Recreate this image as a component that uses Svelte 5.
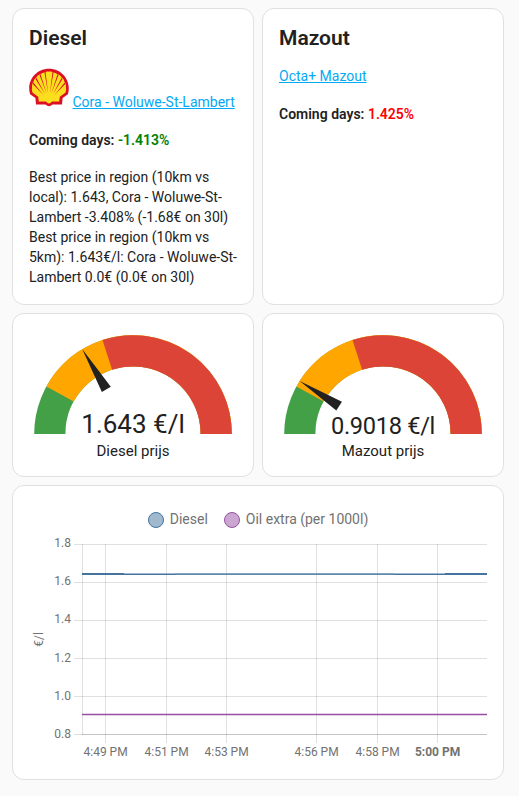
<script>
  const gauges = [
    { value: '1.643 €/l', name: 'Diesel prijs', angle: 59.15, size: 26, spacing: 0, baseline: 103 },
    { value: '0.9018 €/l', name: 'Mazout prijs', angle: 32.46, size: 23.6, spacing: -0.3, baseline: 104 }
  ];
  const levels = [
    { start: 0, color: '#43a047' },
    { start: 28.8, color: '#ffa600' },
    { start: 72, color: '#db4437' }
  ];
  const rad = (deg) => (deg * Math.PI) / 180;
  const arc = (deg) =>
    `M ${-40 * Math.cos(rad(deg))} ${-40 * Math.sin(rad(deg))} A 40 40 0 0 1 40 0`;

  const series = [
    { label: 'Diesel', color: '#44739e', fill: '#a1b9ce' },
    { label: 'Oil extra (per 1000l)', color: '#984ea3', fill: '#cba6d1' }
  ];
  const yTicks = ['1.8', '1.6', '1.4', '1.2', '1.0', '0.8'].map((label, i) => ({
    label,
    y: 14.5 + i * 38,
    baseline: Math.round(17 + i * 38.2)
  }));
  const xTicks = [
    { label: '4:49 PM', x: 76.5 },
    { label: '4:51 PM', x: 137.5 },
    { label: '4:53 PM', x: 197.5 },
    { label: '4:56 PM', x: 287.5 },
    { label: '4:58 PM', x: 348.5 },
    { label: '5:00 PM', x: 408.5, bold: true }
  ];
</script>

<main>
  <div class="row">
    <section class="card text">
      <h2>Diesel</h2>
      <p class="station">
        <svg class="logo" width="40" height="40" viewBox="0 0 40 40">
          <path fill="#dd0f22" d="M20 1.7C31 1.7 39.8 10.4 39.8 21.3c0 2.200-.4 4.200-.9 6L33.600 31 33 37.600H23.300C22.300 38.700 21.200 39.200 20 39.200s-2.300-.5-3.300-1.600H7L6.400 31 1.100 27.300c-.5-1.800-.9-3.800-.9-6C.2 10.400 9 1.700 20 1.700z" />
          <path fill="#fbdf1f" d="M20 4.700C21.200 4.300 23.100 4.700 24 5.400 25.600 5.300 27.400 6.100 28.500 7.300 30.100 7.500 31.800 8.900 32.600 10.500 34.100 11.200 35.300 13.300 35.500 15 36.700 16.300 37.200 18.500 36.900 20.300 37.400 22 37.100 24.200 36.300 25.700L30.800 29.700 30.200 34.600H23C22 35.900 21 36.400 20 36.400S18 35.900 17 34.600H9.800L9.200 29.700 3.700 25.700C2.900 24.200 2.600 22 3.100 20.300 2.800 18.500 3.300 16.300 4.500 15 4.700 13.300 5.900 11.200 7.400 10.500 8.200 8.900 9.900 7.500 11.500 7.300 12.600 6.100 14.400 5.300 16 5.400 16.900 4.700 18.800 4.300 20 4.700z" />
          <path fill="#dd0f22" d="M19.200 27 15.500 5.400 16.500 5.100zM20.800 27 23.500 5.100 24.500 5.400zM17.800 27 10.500 7.900 11.400 7.100zM22.200 27 28.600 7.100 29.500 7.900zM16.300 27.500 6.500 12 7.300 10.800zM23.700 27.500 32.700 10.800 33.500 12zM14.600 28.300 3.800 17 4.300 15.600zM25.400 28.300 35.700 15.600 36.200 17z" />
        </svg>
        <a href="#station">Cora - Woluwe-St-Lambert</a>
      </p>
      <p><b>Coming days: <span class="down">-1.413%</span></b></p>
      <p class="best">
        Best price in region (10km vs local): 1.643, Cora - Woluwe-St-Lambert -3.408% (-1.68€ on 30l)<br />
        Best price in region (10km vs 5km): 1.643€/l: Cora - Woluwe-St-Lambert 0.0€ (0.0€ on 30l)
      </p>
    </section>
    <section class="card text">
      <h2>Mazout</h2>
      <p><a href="#mazout">Octa+ Mazout</a></p>
      <p><b>Coming days: <span class="up">1.425%</span></b></p>
    </section>
  </div>

  <div class="row">
    {#each gauges as g}
      <section class="card gauge">
        <svg width="208" height="104" viewBox="0 0 208 104">
          <g transform="translate(104 104) scale(2.08)">
            {#each levels as l}
              <path d={arc(l.start)} fill="none" stroke={l.color} stroke-width="15" />
            {/each}
            <path d="M-25 -2.5L-47.5 0L-25 2.5z" fill="#212121" transform="rotate({g.angle})" />
          </g>
          <text x="104" y={g.baseline} font-size={g.size} letter-spacing={g.spacing} text-anchor="middle">{g.value}</text>
        </svg>
        <div class="name">{g.name}</div>
      </section>
    {/each}
  </div>

  <section class="card chart">
    <div class="legend">
      {#each series as s}
        <div class="item">
          <i style="background: {s.fill}; border-color: {s.color}"></i>{s.label}
        </div>
      {/each}
    </div>
    <svg width="458" height="234" viewBox="0 0 458 234">
      <g class="grid">
        {#each yTicks as t}
          <path d="M45 {t.y}H458" />
        {/each}
        {#each [53.5, ...xTicks.map((t) => t.x)] as x, i}
          <path d="M{x} 14V{i ? 213 : 205}" />
        {/each}
        <path d="M53 204.5H458" />
      </g>
      <g class="labels">
        {#each yTicks as t}
          <text x="42" y={t.baseline} text-anchor="end">{t.label}</text>
        {/each}
        {#each xTicks as t}
          <text x={t.x + 0.1} y="226" text-anchor="middle" class:bold={t.bold}>{t.label}</text>
        {/each}
        <text transform="translate(14 109.500) rotate(-90)" text-anchor="middle">€/l</text>
      </g>
      <path d="M53 44H95M416 44H458" stroke="#44739e" stroke-width="2" />
      <path d="M95 43.500H146M365 43.500H416" stroke="#44739e" stroke-opacity=".5" />
      <path d="M95 44.500H146M365 44.500H416" stroke="#44739e" />
      <path d="M146 43.500H365" stroke="#44739e" stroke-opacity=".65" />
      <path d="M146 44.500H365" stroke="#44739e" stroke-opacity=".85" />
      <path d="M53 184.600H458" stroke="#984ea3" stroke-width="1.500" />
    </svg>
  </section>
</main>

<style>
  :global(body) {
    margin: 0;
    background: #fafafa;
  }
  main {
    box-sizing: border-box;
    width: 519px;
    height: 796px;
    padding: 8px 15px 16px 12px;
    display: flex;
    flex-direction: column;
    gap: 8px;
    font: 14px/20px Roboto, sans-serif;
    color: #212121;
  }
  .row {
    display: flex;
    gap: 8px;
  }
  .card {
    box-sizing: border-box;
    border: 1px solid #e0e0e0;
    border-radius: 12px;
    background: #fff;
  }
  .row .card {
    width: 242px;
  }
  .text {
    height: 297px;
    padding: 17px 16px 15px;
  }
  h2 {
    margin: 0 0 16px;
    font-size: 21px;
    line-height: 24px;
    font-weight: 600;
  }
  p {
    margin: 0 0 18px;
  }
  .station {
    height: 45px;
    padding-top: 1px;
    white-space: nowrap;
  }
  .best {
    margin: -1px 0 0;
    width: 210px;
  }
  a {
    color: #03a9f4;
  }
  b {
    font-weight: 600;
  }
  .down {
    color: green;
  }
  .up {
    color: red;
  }
  .gauge {
    height: 164px;
    padding: 16px;
    text-align: center;
  }
  svg {
    display: block;
    overflow: visible;
  }
  .logo {
    display: inline;
    vertical-align: baseline;
  }
  .gauge text {
    fill: #212121;
  }
  .name {
    margin-top: 6px;
    font-size: 15px;
    line-height: 22px;
  }
  .chart {
    height: 295px;
    padding: 24px 16px 0;
  }
  .legend {
    display: flex;
    justify-content: center;
    gap: 16px;
    height: 20px;
    color: #727272;
    line-height: 18px;
  }
  .item {
    display: flex;
  }
  .item i {
    box-sizing: border-box;
    width: 16px;
    height: 16px;
    margin: 2px 6px 0 0;
    border: 1px solid;
    border-radius: 50%;
  }
  .grid path {
    stroke: #000;
    stroke-opacity: 0.12;
  }
  .labels text {
    font-size: 12px;
    fill: #727272;
  }
  .labels .bold {
    font-weight: 700;
  }
</style>
